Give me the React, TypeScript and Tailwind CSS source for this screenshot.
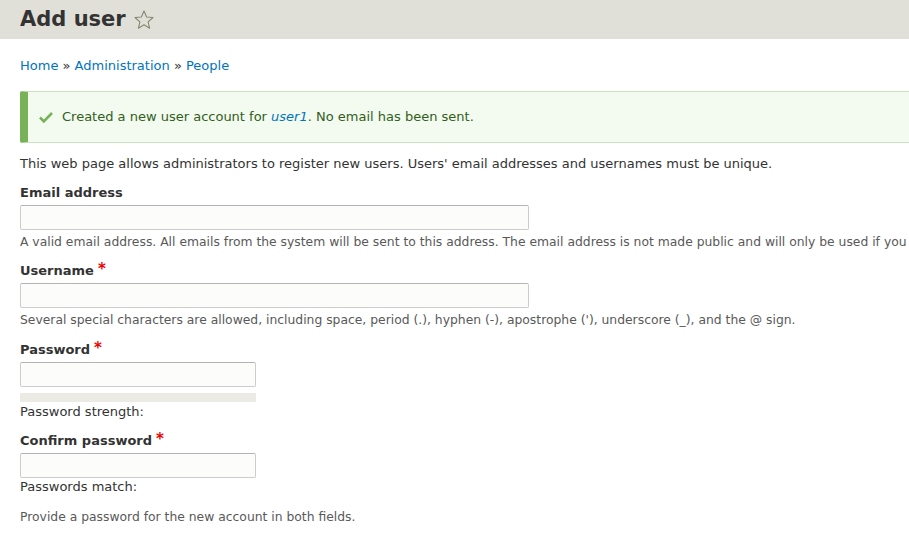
import React from 'react';

const font = { fontFamily: '"DejaVu Sans", Verdana, sans-serif' };

function Required() {
  return <span className="ml-1 align-top text-[15px] leading-none font-bold text-[#e00]">*</span>;
}

function Field({
  label,
  required,
  wide,
  className = '',
  children,
}: {
  label: string;
  required?: boolean;
  wide?: boolean;
  className?: string;
  children?: React.ReactNode;
}) {
  return (
    <div className={`mb-[11px] ${className}`}>
      <label className="block font-bold text-[13px] leading-[18px] text-[#333] mb-[3px]">
        {label}
        {required && <Required />}
      </label>
      <input
        type="text"
        className={`block h-[25px] rounded-[2px] border border-[#ccc] border-t-[#b4b4b4] bg-[#fcfcfa] ${
          wide ? 'w-[509px]' : 'w-[236px]'
        }`}
      />
      {children}
    </div>
  );
}

export default function App() {
  return (
    <div className="w-[909px] h-[536px] overflow-hidden bg-white text-[13px] text-[#333]" style={font}>
      <div className="h-[39px] bg-[#e0e0d8] px-5 flex items-center">
        <h1 className="text-[21px] font-bold text-[#333] leading-none">Add user</h1>
        <svg width="20" height="20" viewBox="0 0 20 20" className="ml-[8px]">
          <path
            d="M10 1l2.6 6 6.4.5-4.9 4.3 1.5 6.4L10 14.8l-5.6 3.4 1.5-6.4L1 7.5l6.4-.5z"
            fill="none"
            stroke="#868671"
            strokeWidth="1.1"
            strokeLinejoin="round"
          />
        </svg>
      </div>
      <div className="w-[1000px] px-5">
        <div className="pt-[18px] leading-[18px] text-[13px]">
          <a className="text-[#0074bd]">Home</a> » <a className="text-[#0074bd]">Administration</a> »{' '}
          <a className="text-[#0074bd]">People</a>
        </div>
        <div className="mt-[16px] h-[52px] flex items-center rounded-l-[2px] border border-[#c9e1bd] border-l-[8px] border-l-[#77b259] bg-[#f3faef] pl-[10px] text-[#325e1c]">
          <svg width="16" height="14" viewBox="0 0 16 14" className="mr-[8px]">
            <path d="M2 7.5l3.8 3.8L14 3" fill="none" stroke="#77b259" strokeWidth="2.6" />
          </svg>
          <span>
            Created a new user account for <a className="italic text-[#0074bd]">user1</a>. No email has been sent.
          </span>
        </div>
        <p className="mt-[12px] mb-[11px] leading-[18px]">
          This web page allows administrators to register new users. Users' email addresses and usernames must be
          unique.
        </p>
        <Field label="Email address" wide>
          <div className="mt-[3px] text-[12.35px] leading-[18px] text-[#595959] whitespace-nowrap">
            A valid email address. All emails from the system will be sent to this address. The email address is not
            made public and will only be used if you wish to receive a new password or wish to receive certain news or
            notifications by email.
          </div>
        </Field>
        <Field label="Username" required wide>
          <div className="mt-[3px] text-[12.35px] leading-[18px] text-[#595959]">
            Several special characters are allowed, including space, period (.), hyphen (-), apostrophe ('), underscore
            (_), and the @ sign.
          </div>
        </Field>
        <Field label="Password" required className="pt-[1px]">
          <div className="mt-[6px] h-[9px] w-[236px] bg-[#ebeae4]" />
          <div className="mt-[1px] leading-[18px]">Password strength:</div>
        </Field>
        <Field label="Confirm password" required>
          <div className="leading-[18px]">Passwords match:</div>
        </Field>
        <div className="mt-[12px] text-[12.35px] leading-[18px] text-[#595959]">
          Provide a password for the new account in both fields.
        </div>
      </div>
    </div>
  );
}
